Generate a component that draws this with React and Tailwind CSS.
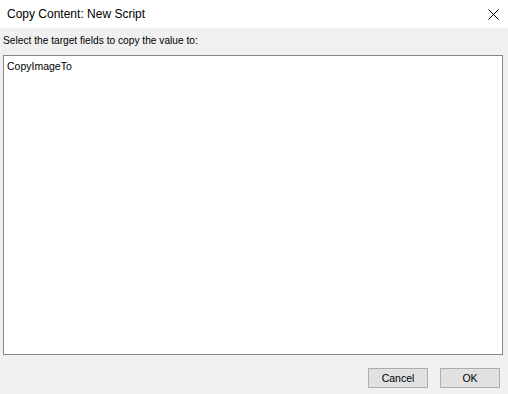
export default function App() {
  return (
    <div className="w-[508px] h-[394px] flex flex-col bg-[#f0f0f0] text-black overflow-hidden" style={{ fontFamily: '"Liberation Sans", Arial, sans-serif' }}>
      {/* Title bar */}
      <div className="h-[28px] bg-white flex items-center justify-between pl-[7px]">
        <span className="text-[12px] leading-none">Copy Content: New Script</span>
        <div className="w-[30px] h-[28px] flex items-center justify-center">
          <svg width="11" height="11" viewBox="0 0 11 11" fill="none" stroke="#000" strokeWidth="1">
            <path d="M0.5 0.5 L10.5 10.5 M10.5 0.5 L0.5 10.5" />
          </svg>
        </div>
      </div>

      {/* Body */}
      <div className="flex-1 flex flex-col px-[3px] pr-[5px]">
        <div className="h-[27px] flex items-center text-[10.2px] leading-none">
          Select the target fields to copy the value to:
        </div>
        <div className="h-[300px] bg-white border border-[#828790] px-[3px] pt-[4px] text-[10.5px] leading-[13px]">
          CopyImageTo
        </div>
        <div className="flex justify-end gap-[12px] mt-[13px] pr-[3px]">
          <button className="w-[60px] h-[20px] bg-[#e1e1e1] border border-[#adadad] text-[10.5px] leading-none">Cancel</button>
          <button className="w-[60px] h-[20px] bg-[#e1e1e1] border border-[#adadad] text-[10.5px] leading-none">OK</button>
        </div>
      </div>
    </div>
  );
}
